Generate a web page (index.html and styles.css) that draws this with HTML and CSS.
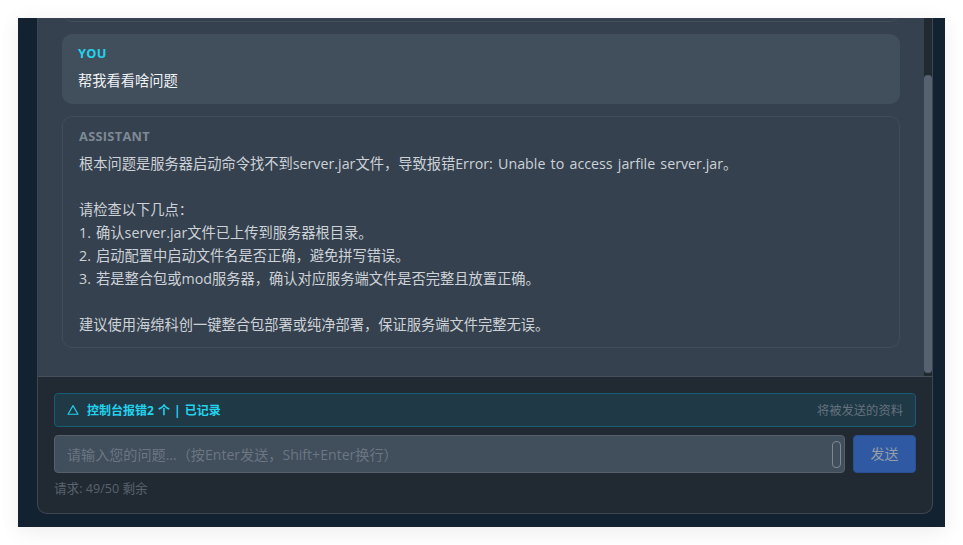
FILE: index.html
```html
<!DOCTYPE html>
<html lang="en">
<head>
    <meta charset="UTF-8">
    <meta name="viewport" content="width=device-width, initial-scale=1.0">
    <title>AI Chat</title>
    <link rel="stylesheet" href="styles.css">
</head>
<body>
    <div class="backdrop">
        <div class="panel">
            <div class="chat-area">
                <div class="messages">
                    <div class="message message-prev"></div>
                    <div class="message message-user">
                        <div class="role role-user">YOU</div>
                        <div class="message-text">帮我看看啥问题</div>
                    </div>
                    <div class="message message-bot">
                        <div class="role role-bot">ASSISTANT</div>
                        <div class="message-text">根本问题是服务器启动命令找不到server.jar文件，导致报错Error: Unable to access jarfile server.jar。

请检查以下几点：
1. 确认server.jar文件已上传到服务器根目录。
2. 启动配置中启动文件名是否正确，避免拼写错误。
3. 若是整合包或mod服务器，确认对应服务端文件是否完整且放置正确。

建议使用海绵科创一键整合包部署或纯净部署，保证服务端文件完整无误。</div>
                    </div>
                </div>
                <div class="scroll-track">
                    <div class="scroll-thumb"></div>
                </div>
            </div>
            <div class="composer">
                <div class="context-bar">
                    <div class="context-title">
                        <svg class="warn-icon" viewBox="0 0 12 12" width="12" height="12" fill="none" stroke="currentColor" stroke-width="1.1" stroke-linejoin="round">
                            <path d="M6 1.6 11 10.2H1Z"/>
                        </svg>
                        <span>控制台报错2 个 | 已记录</span>
                    </div>
                    <span class="context-note">将被发送的资料</span>
                </div>
                <div class="input-row">
                    <div class="input-box">
                        <span class="placeholder">请输入您的问题...（按Enter发送，Shift+Enter换行）</span>
                        <span class="resize-pill"></span>
                    </div>
                    <button class="send-btn">发送</button>
                </div>
                <div class="quota">请求: 49/50 剩余</div>
            </div>
        </div>
    </div>
</body>
</html>
```

FILE: styles.css
```css
/* General Styles */
* {
    box-sizing: border-box;
}

html, body {
    height: 100%;
}

body {
    margin: 0;
    padding: 18px;
    overflow: hidden;
    background: #ffffff;
    font-family: "Open Sans", "Noto Sans CJK SC", sans-serif;
}

.backdrop {
    height: 509px;
    padding: 0 12px 13px 19px;
    background: #132231;
    box-shadow: 0 4px 20px rgba(0, 0, 0, 0.08);
}

.panel {
    display: flex;
    flex-direction: column;
    height: 100%;
    border: 1px solid #3c4753;
    border-top: none;
    border-radius: 0 0 10px 10px;
    overflow: hidden;
    background: #212932;
}

/* Chat area */
.chat-area {
    display: flex;
    flex: none;
    height: 359px;
    background: #35414e;
    border-bottom: 1px solid #45505c;
}

.messages {
    display: flex;
    flex: 1;
    flex-direction: column;
    justify-content: flex-end;
    gap: 12px;
    padding: 0 24px 28px;
    overflow: hidden;
}

.message {
    flex: none;
    border-radius: 10px;
}

.message-prev {
    height: 40px;
    border: 1px solid #424e5a;
}

.message-user {
    height: 70px;
    padding: 10px 16px;
    background: #414e5c;
}

.message-bot {
    height: 232px;
    padding: 10px 16px;
    border: 1px solid #414d5a;
}

.role {
    font-size: 12.8px;
    font-weight: 700;
    line-height: 18px;
    letter-spacing: 0.3px;
}

.role-user {
    color: #22d3ee;
}

.role-bot {
    color: #7e8995;
}

.message-text {
    margin-top: 7px;
    font-size: 14.25px;
    word-spacing: 1.5px;
    line-height: 23px;
    white-space: pre-wrap;
    color: #cdd2d8;
}

.message-user .message-text {
    color: #f1f3f5;
}

/* Scrollbar */
.scroll-track {
    flex: none;
    width: 8px;
    padding: 57px 0 3px;
    background: #212932;
}

.scroll-thumb {
    height: 100%;
    border-radius: 4px;
    background: #56626f;
}

/* Composer */
.composer {
    flex: 1;
    padding: 16px 16px 0;
}

.context-bar {
    display: flex;
    justify-content: space-between;
    align-items: center;
    height: 34px;
    padding: 0 12px;
    border: 1px solid #155e75;
    border-radius: 4px;
    background: #1f3946;
}

.context-title {
    display: flex;
    align-items: center;
    gap: 8px;
    font-size: 12px;
    word-spacing: 1px;
    font-weight: 700;
    color: #22d3ee;
}

.warn-icon {
    flex: none;
}

.context-note {
    font-size: 12.3px;
    color: #65727e;
}

.input-row {
    display: flex;
    gap: 8px;
    margin-top: 8px;
}

.input-box {
    display: flex;
    flex: 1;
    justify-content: space-between;
    align-items: center;
    height: 38px;
    padding: 0 3px 0 12px;
    border: 1px solid #56606c;
    border-radius: 4px;
    background: #414e5c;
}

.placeholder {
    font-size: 14.1px;
    margin-top: -1px;
    color: #6b7683;
}

.resize-pill {
    width: 9px;
    height: 27px;
    border: 1px solid #7d8894;
    border-radius: 4px;
}

.send-btn {
    width: 63px;
    height: 38px;
    padding: 0 0 2px;
    border: 1px solid #2a4f94;
    border-radius: 4px;
    background: #2f5aa3;
    font-family: inherit;
    font-size: 14px;
    color: #969da8;
}

.quota {
    margin-top: 8px;
    font-size: 12.6px;
    line-height: 16px;
    color: #59636e;
}
```
